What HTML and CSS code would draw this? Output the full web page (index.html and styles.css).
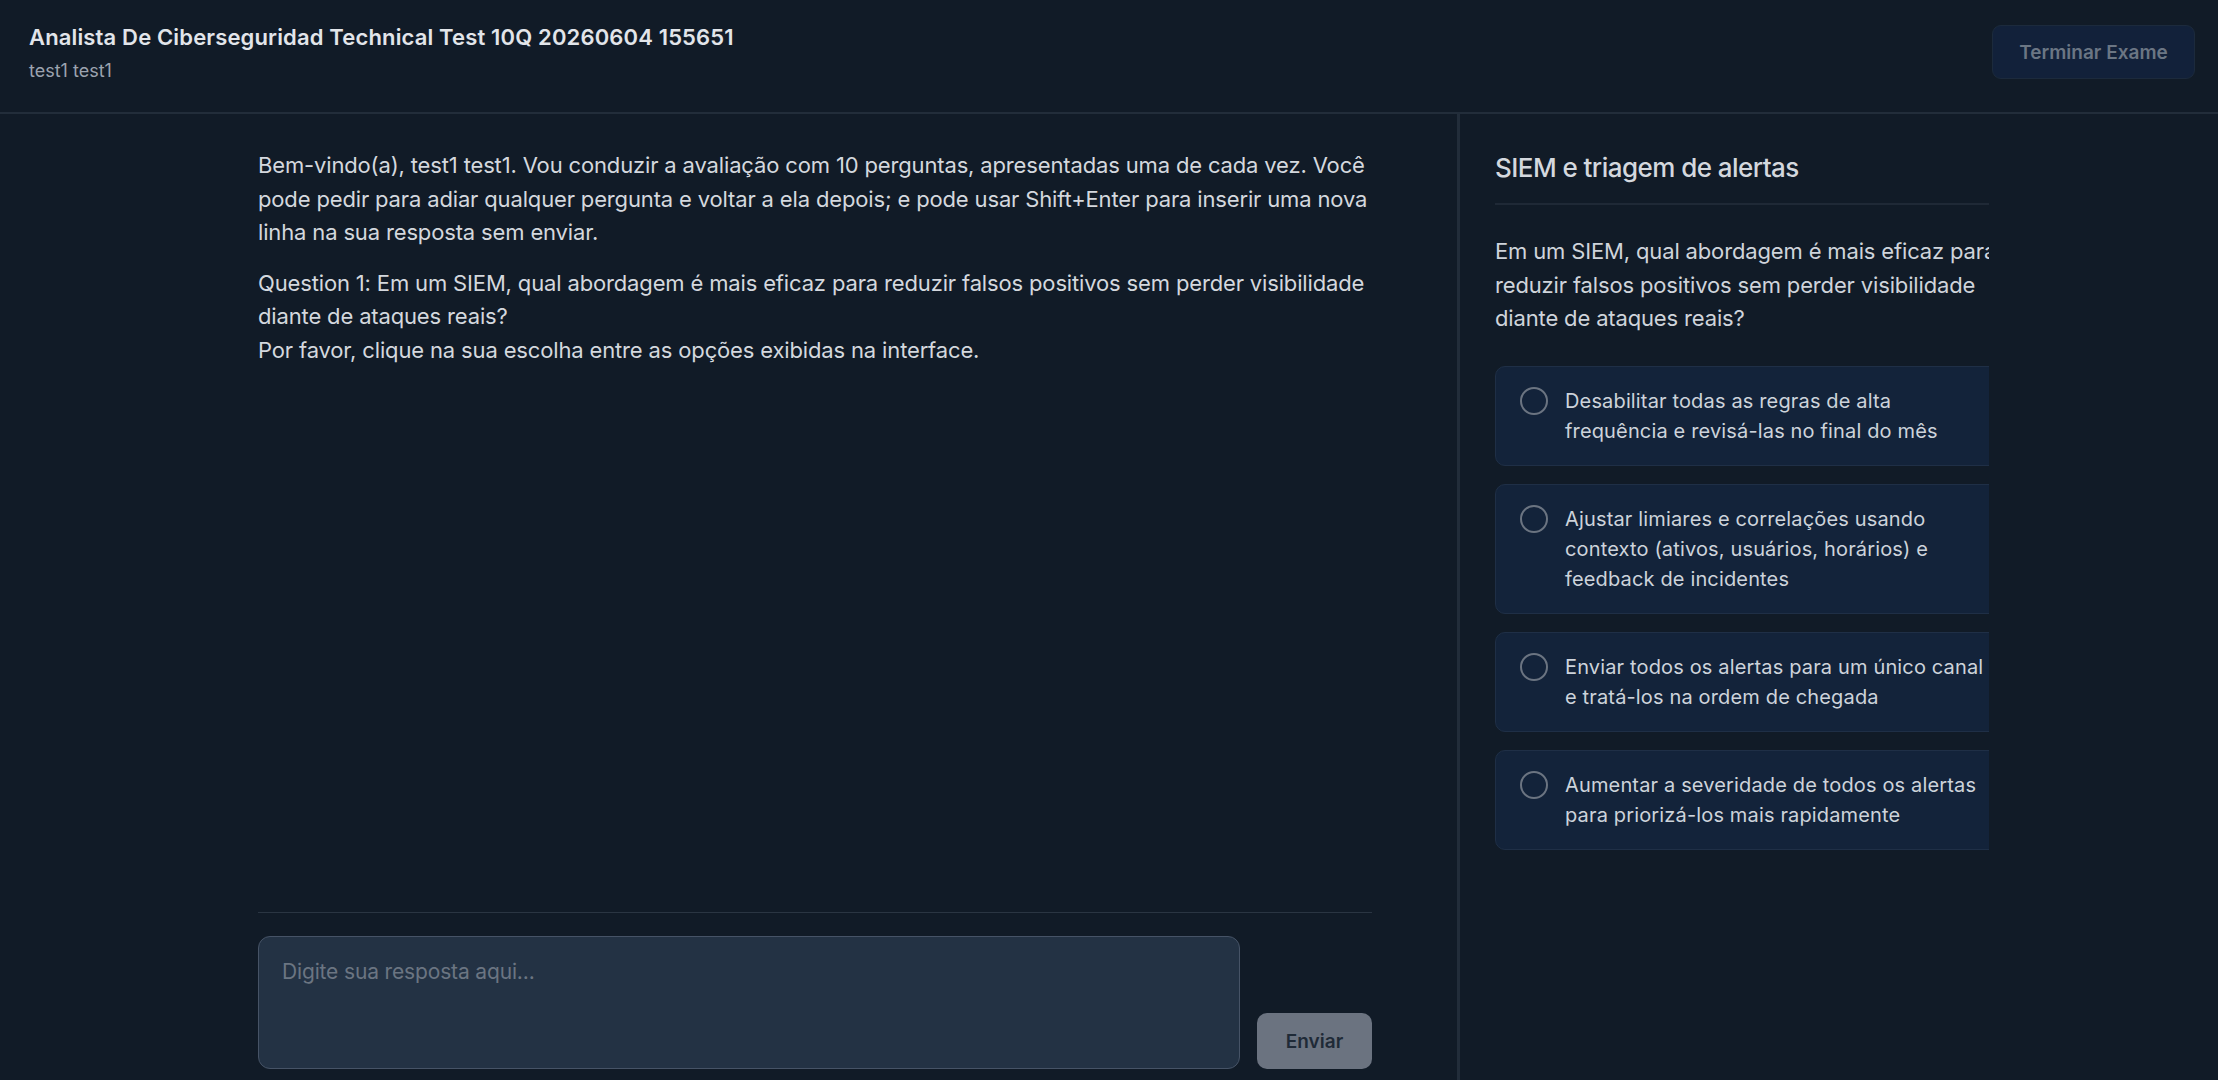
FILE: index.html
```html
<!DOCTYPE html>
<html lang="pt">
<head>
<meta charset="utf-8">
<title>Analista De Ciberseguridad Technical Test</title>
<link rel="stylesheet" href="styles.css">
</head>
<body>
<div class="app">
  <header class="topbar">
    <div class="titles">
      <h1 class="exam-title">Analista De Ciberseguridad Technical Test 10Q 20260604 155651</h1>
      <div class="candidate">test1 test1</div>
    </div>
    <button class="finish-btn" type="button">Terminar Exame</button>
  </header>

  <main class="split">
    <section class="chat">
      <div class="chat-inner">
        <div class="messages">
          <p class="msg">Bem-vindo(a), test1 test1. Vou conduzir a avaliação com 10 perguntas, apresentadas uma de cada vez. Você pode pedir para adiar qualquer pergunta e voltar a ela depois; e pode usar Shift+Enter para inserir uma nova linha na sua resposta sem enviar.</p>
          <p class="msg">Question 1: Em um SIEM, qual abordagem é mais eficaz para reduzir falsos positivos sem perder visibilidade diante de ataques reais?<br>Por favor, clique na sua escolha entre as opções exibidas na interface.</p>
        </div>
        <form class="composer">
          <textarea class="answer" placeholder="Digite sua resposta aqui..."></textarea>
          <button class="send-btn" type="button">Enviar</button>
        </form>
      </div>
    </section>

    <aside class="side">
      <div class="side-clip">
        <div class="side-content">
          <h2 class="topic">SIEM e triagem de alertas</h2>
          <p class="question">Em um SIEM, qual abordagem é mais eficaz para reduzir falsos positivos sem perder visibilidade diante de ataques reais?</p>
          <ul class="options">
            <li class="option"><span class="radio"></span><span class="opt-text">Desabilitar todas as regras de alta frequência e revisá-las no final do mês</span></li>
            <li class="option"><span class="radio"></span><span class="opt-text">Ajustar limiares e correlações usando contexto (ativos, usuários, horários) e feedback de incidentes</span></li>
            <li class="option"><span class="radio"></span><span class="opt-text">Enviar todos os alertas para um único canal e tratá-los na ordem de chegada</span></li>
            <li class="option"><span class="radio"></span><span class="opt-text">Aumentar a severidade de todos os alertas para priorizá-los mais rapidamente</span></li>
          </ul>
        </div>
      </div>
    </aside>
  </main>
</div>
</body>
</html>
```

FILE: styles.css
```css
* {
  box-sizing: border-box;
}

html, body {
  margin: 0;
  height: 100%;
}

body {
  background: #111b27;
  color: #d1d5db;
  font-family: Inter, "Noto Sans", "Liberation Sans", sans-serif;
  overflow: hidden;
}

.app {
  display: flex;
  flex-direction: column;
  height: 100vh;
}

/* top bar */
.topbar {
  display: flex;
  justify-content: space-between;
  align-items: flex-start;
  padding: 22px 23px 0 29px;
  height: 114px;
  border-bottom: 2px solid #222d3a;
  background: #111b27;
  flex-shrink: 0;
}

.exam-title {
  margin: 0;
  font-size: 22px;
  line-height: 30px;
  font-weight: 600;
  color: #e2e5ea;
  letter-spacing: 0.15px;
}

.candidate {
  margin-top: 7px;
  font-size: 18px;
  line-height: 24px;
  color: #9ca3af;
  letter-spacing: 0;
}

.finish-btn {
  margin-top: 3px;
  width: 203px;
  height: 54px;
  border-radius: 9px;
  border: 1px solid #1c2a3c;
  background: #12213a;
  color: #6b7684;
  font-family: inherit;
  font-size: 19px;
  font-weight: 600;
  letter-spacing: 0;
}

/* two panes */
.split {
  flex: 1;
  display: flex;
  min-height: 0;
}

.chat {
  width: 1460px;
  flex-shrink: 0;
  border-right: 3px solid #222d3a;
  display: flex;
}

.chat-inner {
  margin-left: 258px;
  width: 1114px;
  display: flex;
  flex-direction: column;
}

.messages {
  flex: 1;
  padding-top: 35px;
}

.msg {
  margin: 0 0 17px;
  font-size: 22px;
  line-height: 33.5px;
  color: #d4d8de;
  letter-spacing: -0.15px;
}

.composer {
  margin: 0;
  border-top: 1px solid #2a3542;
  padding: 23px 0 11px;
  display: flex;
  align-items: flex-end;
  gap: 17px;
}

.answer {
  flex: 1;
  height: 133px;
  resize: none;
  border-radius: 12px;
  border: 1.5px solid #465366;
  background: #233244;
  padding: 20px 23px;
  font-family: inherit;
  font-size: 21px;
  line-height: 30px;
  color: #d1d5db;
  letter-spacing: -0.15px;
  outline: none;
}

.answer::placeholder {
  color: #6b7582;
}

.send-btn {
  width: 115px;
  height: 56px;
  border: none;
  border-radius: 10px;
  background: #6b7380;
  color: #1f2a37;
  font-family: inherit;
  font-size: 19px;
  font-weight: 600;
  letter-spacing: 0;
}

/* question side panel */
.side {
  flex: 1;
  padding: 35px 0 0 35px;
  overflow: hidden;
}

.side-clip {
  width: 494px;
  overflow: hidden;
}

.side-content {
  width: 540px;
}

.topic {
  margin: 0;
  padding-bottom: 17px;
  border-bottom: 2px solid #1f2936;
  font-size: 26px;
  line-height: 37px;
  font-weight: 500;
  color: #d4d8de;
  letter-spacing: -0.55px;
}

.question {
  margin: 30px 0 30px;
  font-size: 22px;
  line-height: 33.5px;
  color: #cfd4db;
  letter-spacing: -0.15px;
}

.options {
  list-style: none;
  margin: 0;
  padding: 0;
  display: flex;
  flex-direction: column;
  gap: 18px;
}

.option {
  display: flex;
  align-items: flex-start;
  gap: 17px;
  padding: 19px 22px 19px 24px;
  border: 1px solid #1f2f46;
  border-radius: 10px;
  background: #13233a;
}

.radio {
  flex-shrink: 0;
  width: 28px;
  height: 28px;
  margin-top: 1px;
  border-radius: 50%;
  border: 2px solid #6b7481;
}

.opt-text {
  font-size: 20px;
  line-height: 30px;
  color: #cdd3db;
  letter-spacing: 0.15px;
  max-width: 426px;
}
```
